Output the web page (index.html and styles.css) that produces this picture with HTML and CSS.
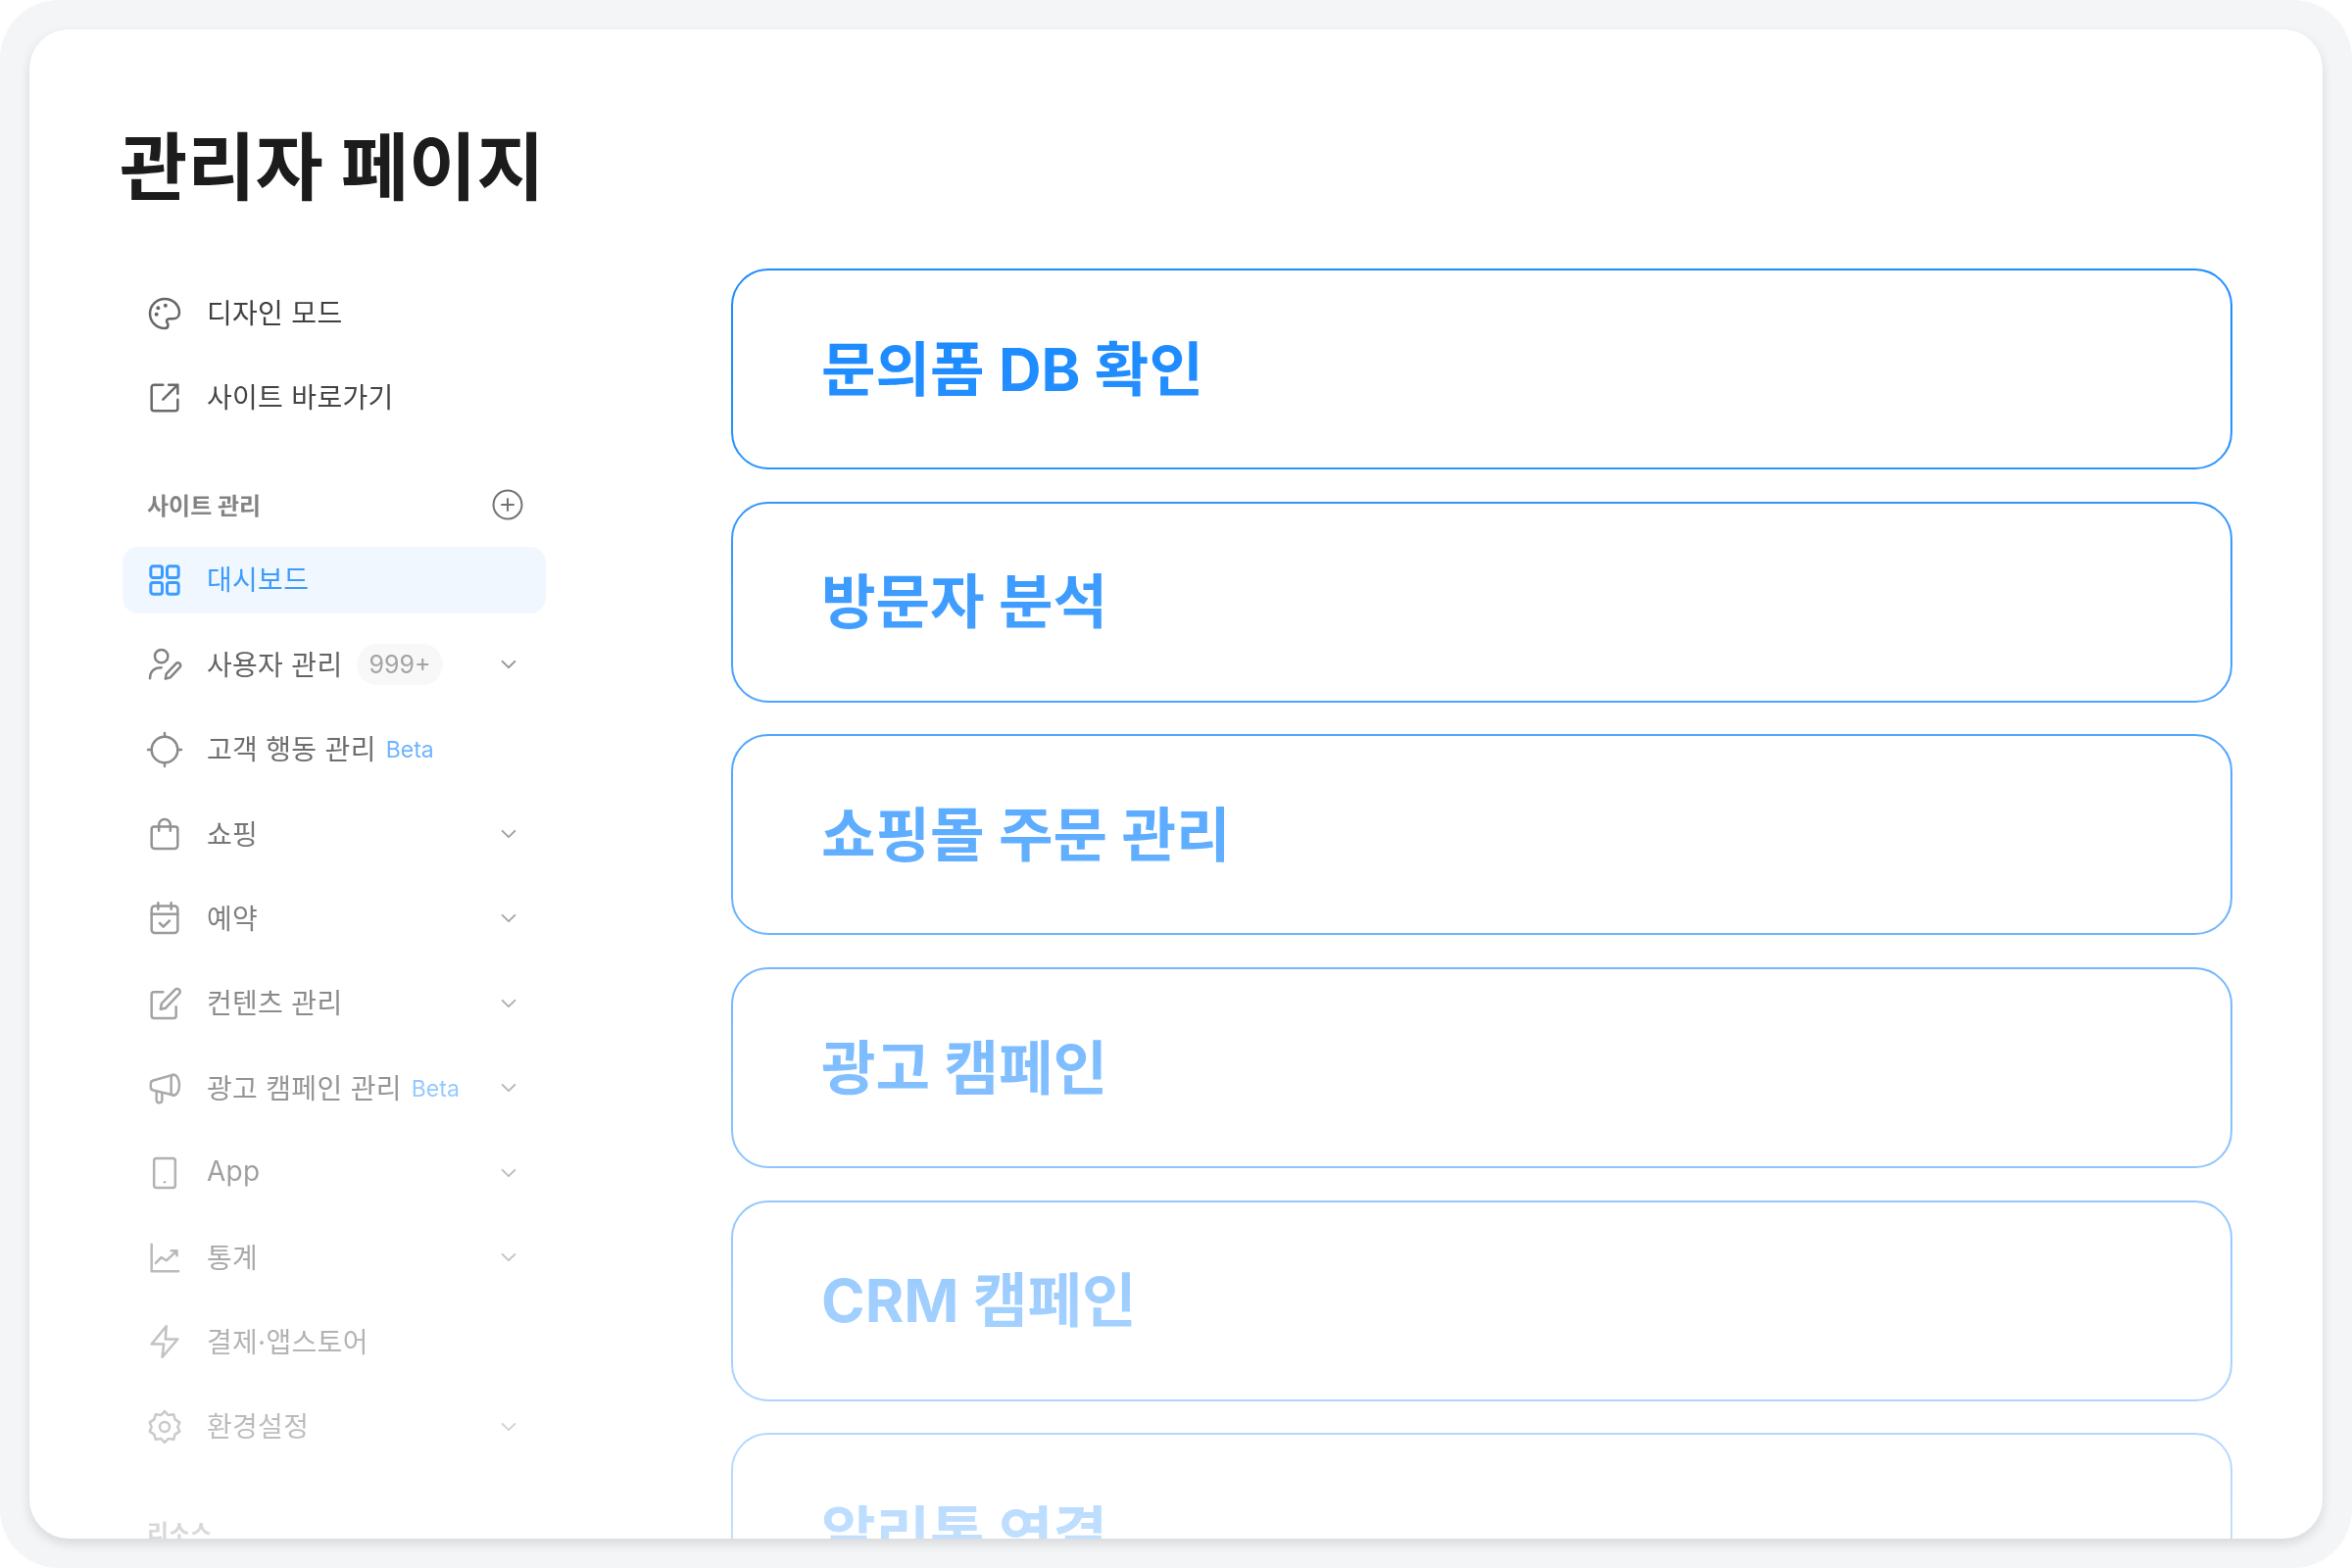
FILE: index.html
```html
<!DOCTYPE html>
<html lang="ko">
<head>
    <meta charset="UTF-8">
    <title>관리자 페이지</title>
    <link rel="stylesheet" href="styles.css">
</head>
<body>
    <div class="frame">
        <div class="shell">
            <div class="fade">
                <h1 class="title">관리자 페이지</h1>
                <div class="layout">
                    <nav class="sidebar">
                        <div class="group">
                            <a class="item">
                                <svg class="icon" viewBox="0 0 24 24"><path d="M12 3a9 9 0 0 0 0 18c1.400 0 2.100-1 2.100-2 0-.6-.3-1-.6-1.500-.3-.5-.5-1-.1-1.600.4-.6 1-.7 1.800-.7h2c2 0 3.800-1.400 3.800-3.700C21 6.500 17 3 12 3z"/><circle class="dot" cx="8" cy="8.500" r="1.200"/><circle class="dot" cx="12.500" cy="7" r="1.200"/><circle class="dot" cx="7" cy="12.500" r="1.200"/></svg>
                                <span>디자인 모드</span>
                            </a>
                            <a class="item">
                                <svg class="icon" viewBox="0 0 24 24"><path d="M11 4H5.500A1.500 1.500 0 0 0 4 5.500v13A1.500 1.500 0 0 0 5.500 20h13a1.500 1.500 0 0 0 1.500-1.500V13"/><path d="M11 13l9-9M14.500 4H20v5.500"/></svg>
                                <span>사이트 바로가기</span>
                            </a>
                        </div>
                        <div class="section">
                            <span>사이트 관리</span>
                            <svg class="plus" viewBox="0 0 32 32"><circle cx="16" cy="16" r="14.500"/><path d="M16 10v12M10 16h12"/></svg>
                        </div>
                        <div class="group">
                            <a class="item active">
                                <svg class="icon" viewBox="0 0 24 24"><rect x="3.500" y="3.500" width="7" height="7" rx="1.500"/><rect x="13.500" y="3.500" width="7" height="7" rx="1.500"/><rect x="3.500" y="13.500" width="7" height="7" rx="1.500"/><rect x="13.500" y="13.500" width="7" height="7" rx="1.500"/></svg>
                                <span>대시보드</span>
                            </a>
                            <a class="item">
                                <svg class="icon" viewBox="0 0 24 24"><circle cx="10" cy="7" r="4"/><path d="M3 20.500c0-4 2.500-6.500 7-6.500"/><path d="M12.500 20.800l.5-3 6-6.300a1.500 1.500 0 0 1 2.300 2.200l-5.900 6.300z"/></svg>
                                <span>사용자 관리</span>
                                <span class="badge">999+</span>
                                <svg class="chevron" viewBox="0 0 24 24"><path d="M5 8.500l7 7 7-7"/></svg>
                            </a>
                            <a class="item">
                                <svg class="icon" viewBox="0 0 24 24"><circle cx="12" cy="12" r="8"/><path d="M12 1.800V4M12 20v2.200M1.800 12H4M20 12h2.200"/></svg>
                                <span>고객 행동 관리</span>
                                <span class="beta">Beta</span>
                            </a>
                            <a class="item">
                                <svg class="icon" viewBox="0 0 24 24"><path d="M5.500 7.500h13a1.500 1.500 0 0 1 1.500 1.500v10a2 2 0 0 1-2 2H6a2 2 0 0 1-2-2V9a1.500 1.500 0 0 1 1.500-1.500z"/><path d="M8.500 10V6.500a3.500 3.500 0 0 1 7 0V10"/></svg>
                                <span>쇼핑</span>
                                <svg class="chevron" viewBox="0 0 24 24"><path d="M5 8.500l7 7 7-7"/></svg>
                            </a>
                            <a class="item">
                                <svg class="icon" viewBox="0 0 24 24"><rect x="4" y="4.500" width="16" height="16.500" rx="2"/><path d="M4 9.500h16M8 2.500v4M16 2.500v4M9 15l2.200 2.200L15 13.500"/></svg>
                                <span>예약</span>
                                <svg class="chevron" viewBox="0 0 24 24"><path d="M5 8.500l7 7 7-7"/></svg>
                            </a>
                            <a class="item">
                                <svg class="icon" viewBox="0 0 24 24"><path d="M11 5H5.500A1.500 1.500 0 0 0 4 6.500v13A1.500 1.500 0 0 0 5.500 21h12a1.500 1.500 0 0 0 1.500-1.500V14"/><path d="M9.500 15.500l.6-3.500 8.300-8.500a1.700 1.700 0 0 1 2.500 2.500l-8.300 8.800z"/></svg>
                                <span>컨텐츠 관리</span>
                                <svg class="chevron" viewBox="0 0 24 24"><path d="M5 8.500l7 7 7-7"/></svg>
                            </a>
                            <a class="item">
                                <svg class="icon" viewBox="0 0 24 24"><path d="M17.500 4L5 7.500A2 2 0 0 0 3.500 9.500v2A2 2 0 0 0 5 13.500l12.500 3"/><path d="M17.500 4c2 0 3.500 2.800 3.500 6.300s-1.500 6.200-3.500 6.200c-1 0-1.500-.5-1.500-.5V4.500s.5-.5 1.500-.5z"/><path d="M7 14v5.500a1.700 1.700 0 0 0 3.400 0V15"/></svg>
                                <span>광고 캠페인 관리</span>
                                <span class="beta">Beta</span>
                                <svg class="chevron" viewBox="0 0 24 24"><path d="M5 8.500l7 7 7-7"/></svg>
                            </a>
                            <a class="item">
                                <svg class="icon" viewBox="0 0 24 24"><rect x="5.500" y="3" width="13" height="18" rx="1.500"/><path d="M12 17.500v.1"/></svg>
                                <span>App</span>
                                <svg class="chevron" viewBox="0 0 24 24"><path d="M5 8.500l7 7 7-7"/></svg>
                            </a>
                            <a class="item">
                                <svg class="icon" viewBox="0 0 24 24"><path d="M4 4v16.500h16.500"/><path d="M6.500 15.500l3.500-3.500 3 2 6.500-6M16 8h3.500v3"/></svg>
                                <span>통계</span>
                                <svg class="chevron" viewBox="0 0 24 24"><path d="M5 8.500l7 7 7-7"/></svg>
                            </a>
                            <a class="item">
                                <svg class="icon" viewBox="0 0 24 24"><path d="M13 2.500L4 13.500h7.500L10.500 21.500 20 10.500h-7.500z"/></svg>
                                <span>결제·앱스토어</span>
                            </a>
                            <a class="item">
                                <svg class="icon" viewBox="0 0 24 24"><path d="M12 2.500l2.200 2.300 3.300-.5.900 3.100 2.800 1.800-1.200 2.800 1.200 2.800-2.800 1.800-.9 3.100-3.300-.5-2.200 2.300-2.200-2.300-3.300.5-.9-3.100-2.800-1.800 1.200-2.800-1.200-2.800 2.800-1.800.9-3.100 3.300.5z"/><circle cx="12" cy="12" r="3"/></svg>
                                <span>환경설정</span>
                                <svg class="chevron" viewBox="0 0 24 24"><path d="M5 8.500l7 7 7-7"/></svg>
                            </a>
                        </div>
                        <div class="section section-last">
                            <span>리소스</span>
                        </div>
                    </nav>
                    <main class="cards">
                        <a class="card">문의폼 DB 확인</a>
                        <a class="card">방문자 분석</a>
                        <a class="card">쇼핑몰 주문 관리</a>
                        <a class="card">광고 캠페인</a>
                        <a class="card">CRM 캠페인</a>
                        <a class="card">알리톡 연결</a>
                    </main>
                </div>
            </div>
        </div>
    </div>
</body>
</html>
```

FILE: styles.css
```css
html {
    background: white;
}
body {
    margin: 0;
    font-family: Inter, "Noto Sans CJK KR", sans-serif;
    color: #333;
}
.frame {
    box-sizing: border-box;
    width: 2400px;
    height: 1600px;
    padding: 30px;
    background: #f4f5f7;
    border-radius: 60px;
}
.shell {
    height: 1540px;
    background: white;
    border-radius: 40px;
    box-shadow: 0 5px 12px rgba(0, 0, 0, 0.12);
    overflow: hidden;
}
/* everything fades out towards the bottom of the window */
.fade {
    height: 100%;
    overflow: hidden;
    box-sizing: border-box;
    padding: 91px 92px 0 95px;
    -webkit-mask-image: linear-gradient(#000 340px, rgba(0, 0, 0, 0.28) 1540px);
    mask-image: linear-gradient(#000 340px, rgba(0, 0, 0, 0.28) 1540px);
}
.title {
    margin: 0 0 53px -3px;
    font-size: 75.3px;
    line-height: 100px;
    font-weight: 700;
    color: #1c1c1c;
}
.layout {
    display: flex;
    gap: 189px;
    align-items: flex-start;
}
.sidebar {
    width: 432px;
    flex: none;
    padding-top: 11.5px;
}
.group {
    display: flex;
    flex-direction: column;
    gap: 18.4px;
}
.item {
    display: flex;
    align-items: center;
    height: 68px;
    padding: 0 27px 0 23px;
    border-radius: 16px;
    font-size: 28px;
    letter-spacing: 0.3px;
    color: #404040;
}
.item > span {
    margin-bottom: 3px;
}
.item.active {
    background: #eef6ff;
    color: #1e8cff;
}
.icon {
    width: 40px;
    height: 40px;
    margin-right: 23px;
    flex: none;
    fill: none;
    stroke: #666;
    stroke-width: 1.5;
    stroke-linecap: round;
    stroke-linejoin: round;
}
.active .icon {
    stroke: #1e8cff;
    stroke-width: 1.8;
}
.icon .dot {
    fill: #666;
    stroke: none;
}
.chevron {
    width: 22px;
    height: 22px;
    margin-left: auto;
    flex: none;
    fill: none;
    stroke: #777;
    stroke-width: 2;
    stroke-linecap: round;
    stroke-linejoin: round;
}
.item > .badge {
    margin: 0 0 0 15px;
    padding: 0 12px;
    height: 42px;
    line-height: 42px;
    border-radius: 21px;
    background: #f6f6f7;
    font-size: 25px;
    letter-spacing: 0;
    color: #8f8f8f;
}
.item > .beta {
    margin: 1px 0 0 10px;
    font-size: 23px;
    letter-spacing: 0;
    color: #1e8cff;
    opacity: 0.85;
}
.section {
    display: flex;
    align-items: center;
    justify-content: space-between;
    height: 40px;
    margin: 55px 0 23px;
    padding: 0 23px 0 25px;
    font-size: 24px;
    font-weight: 700;
    color: #777;
}
.section-last {
    margin-top: 53px;
}
.plus {
    width: 32px;
    height: 32px;
    fill: none;
    stroke: #666;
    stroke-width: 2;
    stroke-linecap: round;
}
.cards {
    flex: 1;
    display: flex;
    flex-direction: column;
    gap: 32.7px;
}
.card {
    box-sizing: border-box;
    flex: none;
    display: flex;
    align-items: center;
    height: 205px;
    padding: 0 0 9px 90px;
    border: 2px solid #1e8cff;
    border-radius: 38px;
    font-size: 60.4px;
    font-weight: 700;
    color: #1e8cff;
}
```
